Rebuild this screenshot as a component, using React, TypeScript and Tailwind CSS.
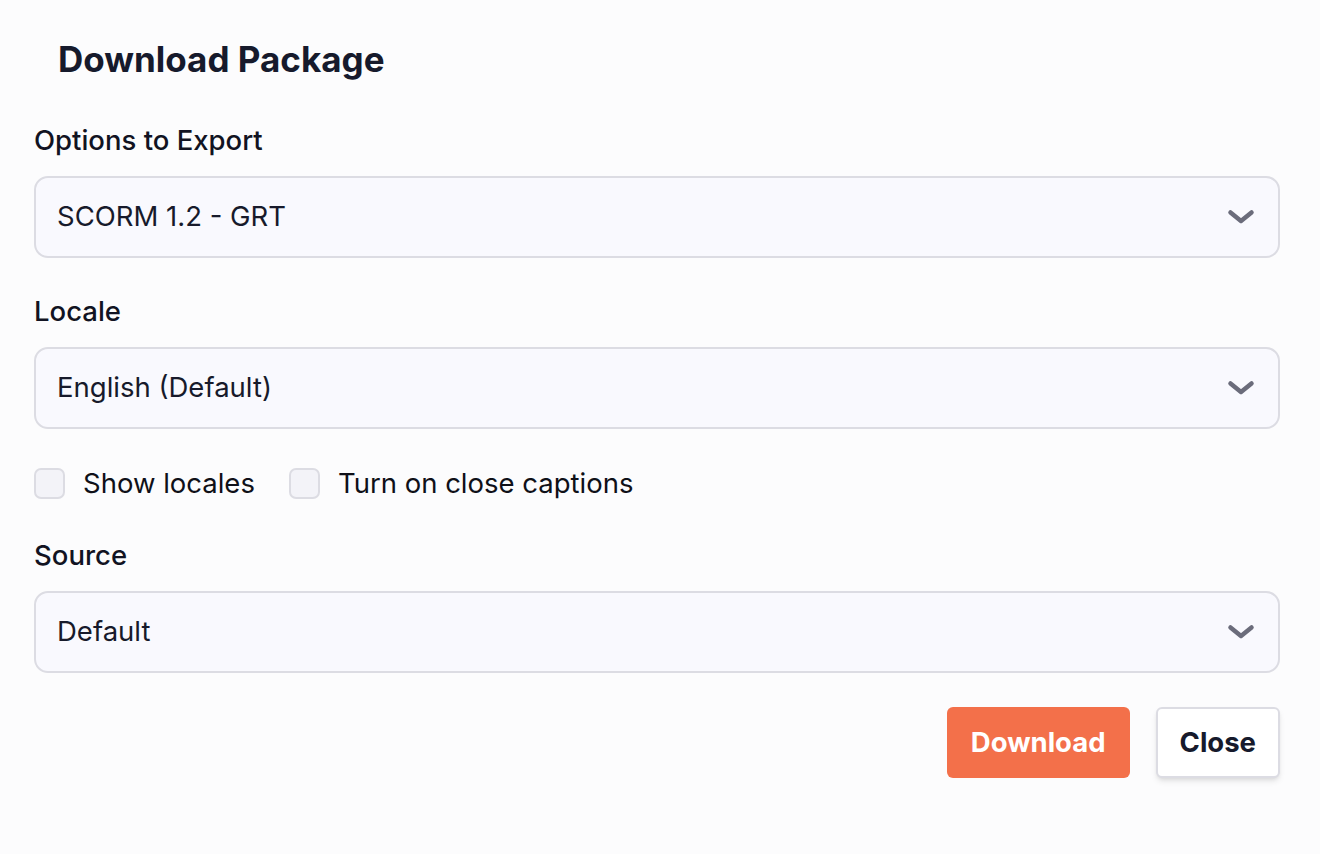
import { useState } from 'react';

interface SelectFieldProps {
  label: string;
  value: string;
  className?: string;
}

function Chevron() {
  return (
    <svg width="28" height="16" viewBox="0 0 28 16" fill="none" className="shrink-0">
      <path d="M3.5 3.5 L14 12 L24.5 3.5" stroke="#6b6c7b" strokeWidth="4.5" strokeLinecap="round" strokeLinejoin="round" />
    </svg>
  );
}

function SelectField({ label, value, className = '' }: SelectFieldProps) {
  return (
    <div className={className}>
      <p className="text-[27.5px] leading-[32px] pt-[2px] font-medium text-[#111322]">{label}</p>
      <button className="mt-[20px] w-full h-[82px] flex items-center justify-between pl-[21px] pr-[23px] rounded-[14px] border-2 border-[#dcdce3] bg-[#f9f9fe] text-left">
        <span className="text-[27.5px] text-[#171a2b]">{value}</span>
        <Chevron />
      </button>
    </div>
  );
}

function Checkbox({ label, checked, onChange }: { label: string; checked: boolean; onChange: () => void }) {
  return (
    <label className="flex items-center gap-[18px] cursor-pointer">
      <span
        onClick={onChange}
        className="w-[31px] h-[31px] rounded-[7px] border-2 border-[#dcdce3] bg-[#f3f3f8] flex items-center justify-center"
      >
        {checked && <span className="w-3 h-3 rounded-sm bg-[#f3704a]" />}
      </span>
      <span className="text-[27.5px] leading-[32px] text-[#0f1018]">{label}</span>
    </label>
  );
}

export default function App() {
  const [showLocales, setShowLocales] = useState(false);
  const [captions, setCaptions] = useState(false);

  return (
    <div
      className="w-[1320px] h-[854px] bg-[#fcfcfd] pl-[34px] pr-[40px] pt-[35px]"
      style={{ fontFamily: 'Inter, "Noto Sans", sans-serif' }}
    >
      <h1 className="pl-[24px] text-[35px] leading-[48px] font-bold text-[#161a2c]">Download Package</h1>

      <SelectField label="Options to Export" value="SCORM 1.2 - GRT" className="mt-[39px]" />
      <SelectField label="Locale" value="English (Default)" className="mt-[35px]" />

      <div className="mt-[38px] flex items-center gap-[34px]">
        <Checkbox label="Show locales" checked={showLocales} onChange={() => setShowLocales(!showLocales)} />
        <Checkbox label="Turn on close captions" checked={captions} onChange={() => setCaptions(!captions)} />
      </div>

      <SelectField label="Source" value="Default" className="mt-[38px]" />

      <div className="mt-[34px] flex justify-end gap-[26px]">
        <button className="h-[71px] px-[24px] rounded-[6px] bg-[#f3704a] text-white text-[27.5px] font-bold">
          Download
        </button>
        <button className="h-[71px] px-[22px] rounded-[6px] bg-white border-2 border-[#dcdce3] shadow-md text-[#161a2c] text-[27.5px] font-bold">
          Close
        </button>
      </div>
    </div>
  );
}
